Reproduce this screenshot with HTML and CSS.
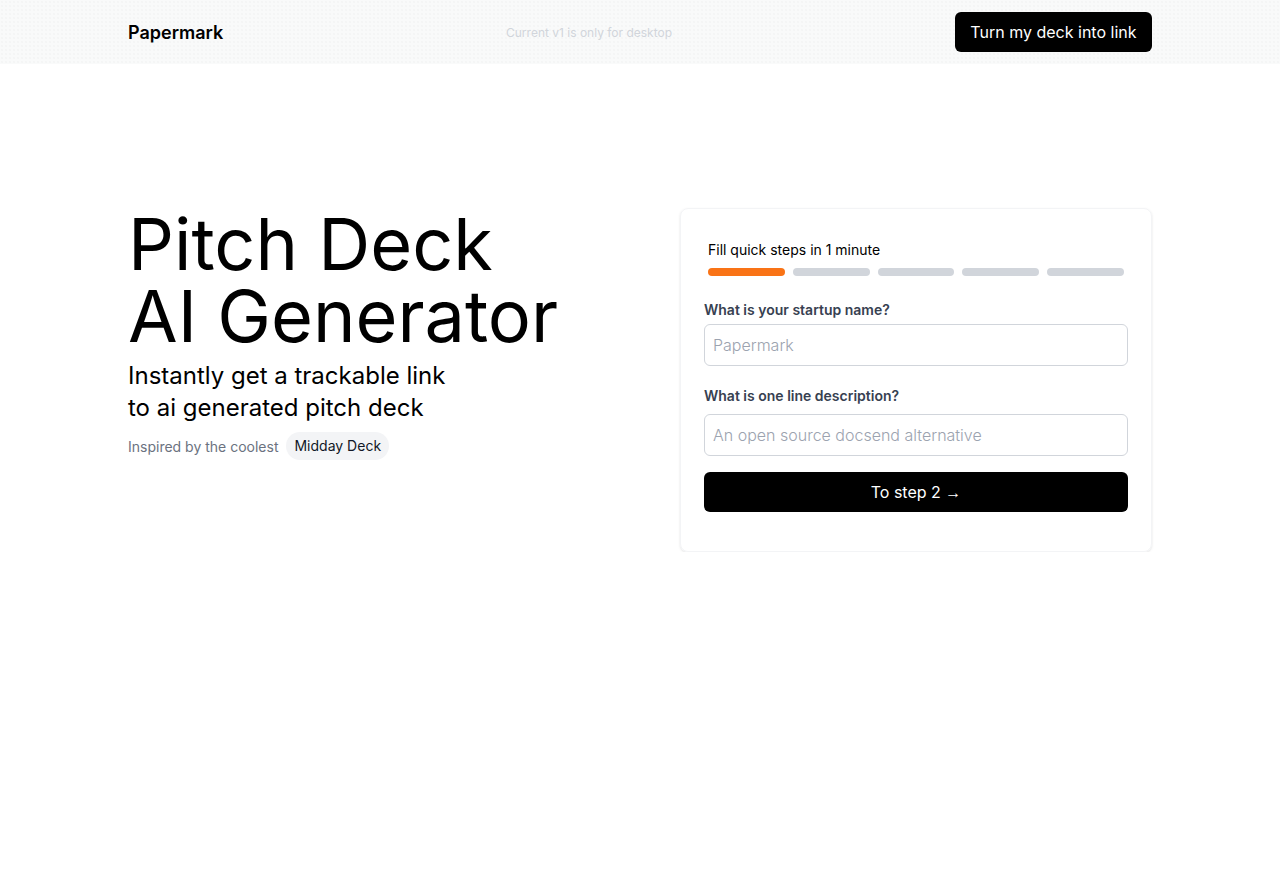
FILE: index.html
```html
<!DOCTYPE html>
<html lang="en">
<head>
<meta charset="utf-8">
<title>Papermark - Pitch Deck AI Generator</title>
<link rel="stylesheet" href="styles.css">
</head>
<body>
<header class="topbar">
  <div class="topbar-inner">
    <div class="brand">Papermark</div>
    <div class="notice">Current v1 is only for desktop</div>
    <button class="btn-dark btn-top">Turn my deck into link</button>
  </div>
</header>
<main class="hero">
  <section class="intro">
    <h1 class="title">Pitch Deck<br>AI Generator</h1>
    <p class="subtitle">Instantly get a trackable link<br>to ai generated pitch deck</p>
    <div class="inspired">
      <span class="inspired-text">Inspired by the coolest</span>
      <span class="chip">Midday Deck</span>
    </div>
  </section>
  <section class="card">
    <div class="progress-block">
      <div class="progress-label">Fill quick steps in 1 minute</div>
      <div class="progress">
        <span class="seg seg-active"></span>
        <span class="seg"></span>
        <span class="seg"></span>
        <span class="seg"></span>
        <span class="seg"></span>
      </div>
    </div>
    <label class="field-label first">What is your startup name?</label>
    <input class="field" type="text" placeholder="Papermark">
    <label class="field-label second">What is one line description?</label>
    <input class="field" type="text" placeholder="An open source docsend alternative">
    <button class="btn-dark btn-step">To step 2 <span class="arrow">→</span></button>
  </section>
</main>
</body>
</html>
```

FILE: styles.css
```css
* { box-sizing: border-box; }
html, body { margin: 0; padding: 0; }
body {
  font-family: Inter, "Noto Sans", sans-serif;
  color: #000;
  background: #fff;
  -webkit-font-smoothing: antialiased;
}
.topbar {
  height: 64px;
  background-color: #f9fafa;
  background-image: radial-gradient(circle, #eef0f0 0.6px, transparent 0.8px);
  background-size: 4px 4px;
}
.topbar-inner {
  width: 1024px;
  height: 64px;
  margin: 0 auto;
  display: flex;
  align-items: center;
  justify-content: space-between;
}
.brand {
  font-size: 18px;
  font-weight: 600;
  color: #000;
}
.notice {
  font-size: 12px;
  color: #d1d5db;
}
.btn-dark {
  background: #000;
  color: #fff;
  border: none;
  border-radius: 6px;
  font-family: inherit;
  font-size: 16px;
  cursor: pointer;
}
.btn-top {
  height: 40px;
  padding: 0 15.5px;
}
.hero {
  width: 1024px;
  margin: 144px auto 0;
  display: flex;
  justify-content: space-between;
  align-items: flex-start;
}
.title {
  margin: 0;
  font-size: 72px;
  font-weight: 400;
  line-height: 72px;
}
.subtitle {
  margin: 8px 0 0;
  font-size: 24px;
  line-height: 32px;
}
.inspired {
  margin-top: 8px;
  display: flex;
  align-items: center;
  gap: 8px;
}
.inspired-text {
  font-size: 14px;
  color: #6b7280;
}
.chip {
  font-size: 14px;
  color: #111827;
  background: #f3f4f6;
  border-radius: 9999px;
  padding: 4px 8px;
  line-height: 20px;
}
.card {
  width: 472px;
  border: 1px solid #f3f4f6;
  border-radius: 8px;
  box-shadow: 0 1px 3px rgba(0,0,0,0.08), 0 1px 2px rgba(0,0,0,0.04);
  padding: 23px 23px 39px;
  display: flex;
  flex-direction: column;
}
.progress-block {
  padding: 8px 4px;
}
.progress-label {
  font-size: 14px;
  line-height: 20px;
  color: #000;
}
.progress {
  margin-top: 8px;
  display: flex;
  gap: 8px;
}
.seg {
  flex: 1;
  height: 8px;
  border-radius: 9999px;
  background: #d1d5db;
}
.seg-active { background: #f97316; }
.field-label {
  font-size: 14px;
  line-height: 20px;
  font-weight: 600;
  color: #374151;
}
.field-label.first { margin-top: 16px; margin-bottom: 4px; }
.field-label.second { margin-top: 20px; margin-bottom: 8px; }
.field {
  height: 42px;
  border: 1px solid #d1d5db;
  border-radius: 6px;
  padding: 0 8px;
  font-family: inherit;
  font-size: 16px;
  color: #111827;
  outline: none;
}
.field::placeholder { color: #9ca3af; font-weight: 300; }
.btn-step {
  margin-top: 16px;
  height: 40px;
  width: 100%;
}
.arrow {
  font-family: "Liberation Sans", sans-serif;
}
```
